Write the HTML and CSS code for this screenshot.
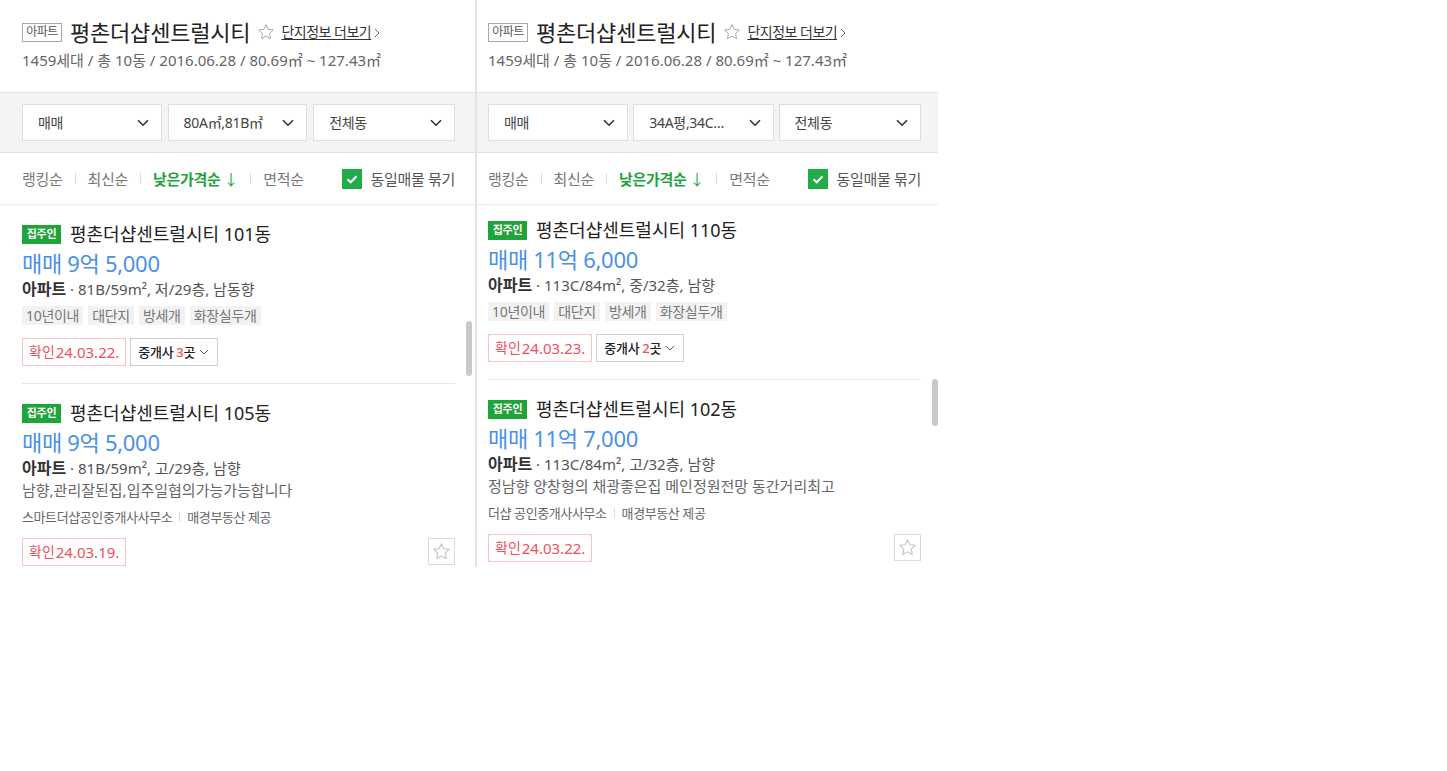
FILE: index.html
```html
<!DOCTYPE html>
<html lang="ko">
<head>
<meta charset="utf-8">
<title>평촌더샵센트럴시티</title>
<link rel="stylesheet" href="styles.css">
</head>
<body>
<div class="wrap">
  <section class="panel panel--left">
    <header class="complex">
      <div class="complex-row">
        <span class="type-tag">아파트</span>
        <h1 class="complex-name">평촌더샵센트럴시티</h1>
        <svg class="fav" viewBox="0 0 20 20" width="18" height="18"><path d="M10 1.8l2.45 5.25 5.7.7-4.2 3.95 1.08 5.68L10 14.6l-5.03 2.78 1.08-5.68L1.85 7.75l5.7-.7z" fill="none" stroke="#a8a8a8" stroke-width="1.1" stroke-linejoin="round"/></svg>
        <a class="more" href="#">단지정보 더보기</a><svg class="more-arrow" viewBox="0 0 6 10" width="6" height="10"><path d="M1 1l4 4-4 4" fill="none" stroke="#666" stroke-width="1"/></svg>
      </div>
      <p class="complex-sub">1459세대 / 총 10동 / 2016.06.28 / 80.69㎡ ~ 127.43㎡</p>
    </header>
    <div class="filters">
      <div class="select"><span>매매</span><svg viewBox="0 0 12 8" width="12" height="8"><path d="M1 1.2l5 5 5-5" fill="none" stroke="#333" stroke-width="1.6"/></svg></div>
      <div class="select"><span>80A㎡,81B㎡</span><svg viewBox="0 0 12 8" width="12" height="8"><path d="M1 1.2l5 5 5-5" fill="none" stroke="#333" stroke-width="1.6"/></svg></div>
      <div class="select select--wide"><span>전체동</span><svg viewBox="0 0 12 8" width="12" height="8"><path d="M1 1.2l5 5 5-5" fill="none" stroke="#333" stroke-width="1.6"/></svg></div>
    </div>
    <div class="sorts">
      <span class="sort">랭킹순</span><i class="sep"></i>
      <span class="sort">최신순</span><i class="sep"></i>
      <span class="sort sort--on">낮은가격순<span class="arrow">↓</span></span><i class="sep"></i>
      <span class="sort">면적순</span>
      <label class="group"><span class="check"><svg viewBox="0 0 20 20" width="20" height="20"><path d="M5.5 10.2l3.2 3.1 5.8-6" fill="none" stroke="#fff" stroke-width="2"/></svg></span>동일매물 묶기</label>
    </div>
    <div class="list">
      <div class="list-inner">
        <article class="item">
          <div class="item-title"><span class="owner">집주인</span>평촌더샵센트럴시티 101동</div>
          <div class="price">매매 9억 5,000</div>
          <div class="info"><b>아파트</b> · 81B/59m², 저/29층, 남동향</div>
          <div class="tags"><span>10년이내</span><span>대단지</span><span>방세개</span><span>화장실두개</span></div>
          <div class="meta"><span class="confirm"><em>확인</em>24.03.22.</span><span class="broker">중개사 <strong>3</strong>곳<svg viewBox="0 0 10 6" width="10" height="6"><path d="M1 1l4 4 4-4" fill="none" stroke="#555" stroke-width="1"/></svg></span></div>
        </article>
        <article class="item">
          <div class="item-title"><span class="owner">집주인</span>평촌더샵센트럴시티 105동</div>
          <div class="price">매매 9억 5,000</div>
          <div class="info"><b>아파트</b> · 81B/59m², 고/29층, 남향</div>
          <div class="desc">남향,관리잘된집,입주일협의가능가능합니다</div>
          <div class="agent">스마트더샵공인중개사사무소<i class="sep sep--s"></i>매경부동산 제공</div>
          <div class="meta meta--star"><span class="confirm"><em>확인</em>24.03.19.</span><span class="star-btn"><svg viewBox="0 0 20 20" width="19" height="19"><path d="M10 1.8l2.45 5.25 5.7.7-4.2 3.95 1.08 5.68L10 14.6l-5.03 2.78 1.08-5.68L1.85 7.75l5.7-.7z" fill="none" stroke="#c4c4c4" stroke-width="1.1" stroke-linejoin="round"/></svg></span></div>
        </article>
      </div>
      <span class="thumb thumb--left"></span>
    </div>
  </section>

  <section class="panel panel--right">
    <header class="complex">
      <div class="complex-row">
        <span class="type-tag">아파트</span>
        <h1 class="complex-name">평촌더샵센트럴시티</h1>
        <svg class="fav" viewBox="0 0 20 20" width="18" height="18"><path d="M10 1.8l2.45 5.25 5.7.7-4.2 3.95 1.08 5.68L10 14.6l-5.03 2.78 1.08-5.68L1.85 7.75l5.7-.7z" fill="none" stroke="#a8a8a8" stroke-width="1.1" stroke-linejoin="round"/></svg>
        <a class="more" href="#">단지정보 더보기</a><svg class="more-arrow" viewBox="0 0 6 10" width="6" height="10"><path d="M1 1l4 4-4 4" fill="none" stroke="#666" stroke-width="1"/></svg>
      </div>
      <p class="complex-sub">1459세대 / 총 10동 / 2016.06.28 / 80.69㎡ ~ 127.43㎡</p>
    </header>
    <div class="filters">
      <div class="select"><span>매매</span><svg viewBox="0 0 12 8" width="12" height="8"><path d="M1 1.2l5 5 5-5" fill="none" stroke="#333" stroke-width="1.6"/></svg></div>
      <div class="select"><span>34A평,34C…</span><svg viewBox="0 0 12 8" width="12" height="8"><path d="M1 1.2l5 5 5-5" fill="none" stroke="#333" stroke-width="1.6"/></svg></div>
      <div class="select select--wide"><span>전체동</span><svg viewBox="0 0 12 8" width="12" height="8"><path d="M1 1.2l5 5 5-5" fill="none" stroke="#333" stroke-width="1.6"/></svg></div>
    </div>
    <div class="sorts">
      <span class="sort">랭킹순</span><i class="sep"></i>
      <span class="sort">최신순</span><i class="sep"></i>
      <span class="sort sort--on">낮은가격순<span class="arrow">↓</span></span><i class="sep"></i>
      <span class="sort">면적순</span>
      <label class="group"><span class="check"><svg viewBox="0 0 20 20" width="20" height="20"><path d="M5.5 10.2l3.2 3.1 5.8-6" fill="none" stroke="#fff" stroke-width="2"/></svg></span>동일매물 묶기</label>
    </div>
    <div class="list">
      <div class="list-inner list-inner--scrolled">
        <article class="item">
          <div class="item-title"><span class="owner">집주인</span>평촌더샵센트럴시티 110동</div>
          <div class="price">매매 11억 6,000</div>
          <div class="info"><b>아파트</b> · 113C/84m², 중/32층, 남향</div>
          <div class="tags"><span>10년이내</span><span>대단지</span><span>방세개</span><span>화장실두개</span></div>
          <div class="meta"><span class="confirm"><em>확인</em>24.03.23.</span><span class="broker">중개사 <strong>2</strong>곳<svg viewBox="0 0 10 6" width="10" height="6"><path d="M1 1l4 4 4-4" fill="none" stroke="#555" stroke-width="1"/></svg></span></div>
        </article>
        <article class="item">
          <div class="item-title"><span class="owner">집주인</span>평촌더샵센트럴시티 102동</div>
          <div class="price">매매 11억 7,000</div>
          <div class="info"><b>아파트</b> · 113C/84m², 고/32층, 남향</div>
          <div class="desc">정남향 양창형의 채광좋은집 메인정원전망 동간거리최고</div>
          <div class="agent">더샵 공인중개사사무소<i class="sep sep--s"></i>매경부동산 제공</div>
          <div class="meta meta--star"><span class="confirm"><em>확인</em>24.03.22.</span><span class="star-btn"><svg viewBox="0 0 20 20" width="19" height="19"><path d="M10 1.8l2.45 5.25 5.7.7-4.2 3.95 1.08 5.68L10 14.6l-5.03 2.78 1.08-5.68L1.85 7.75l5.7-.7z" fill="none" stroke="#c4c4c4" stroke-width="1.1" stroke-linejoin="round"/></svg></span></div>
        </article>
      </div>
      <span class="thumb thumb--right"></span>
    </div>
  </section>
</div>
</body>
</html>
```

FILE: styles.css
```css
* { box-sizing: border-box; }
html, body { margin: 0; padding: 0; background: #fff; }
body {
  font-family: "Noto Sans", "Noto Sans CJK KR", sans-serif;
  color: #333;
  font-size: 14px;
  line-height: 20px;
}
.wrap { display: flex; align-items: flex-start; }

.panel { height: 567px; display: flex; flex-direction: column; }
.panel--left { width: 477px; border-right: 2px solid #e3e3e3; }
.panel--right { width: 461px; }

.complex { height: 93px; padding: 20px 20px 0 22px; border-bottom: 1px solid #e3e3e3; }
.panel--right .complex { padding-left: 11px; padding-right: 17px; }
.complex-row { display: flex; align-items: center; height: 24px; }
.type-tag {
  display: inline-flex; align-items: center; justify-content: center;
  width: 40px; height: 19px; border: 1px solid #a8a8a8;
  font-size: 12px; color: #555; line-height: 16px; letter-spacing: -0.5px;
}
.complex-name { margin: 0 0 0 8px; font-size: 22px; font-weight: 400; color: #222; line-height: 24px; letter-spacing: -0.2px; }
.fav { margin-left: 7px; }
.more { margin-left: 6px; font-size: 14px; color: #333; text-decoration: underline; text-underline-offset: 2px; letter-spacing: -0.5px; }
.more-arrow { margin-left: 3px; margin-top: 2px; }
.complex-sub { margin: 6px 0 0; font-size: 15px; color: #666; line-height: 20px; letter-spacing: 0; }

.filters {
  display: flex; gap: 6px; background: #f4f4f4;
  padding: 11px 20px 11px 22px; border-bottom: 1px solid #e1e1e1;
}
.panel--right .filters { padding-left: 11px; padding-right: 17px; gap: 5px; }
.select {
  flex: 1; height: 37px; background: #fff; border: 1px solid #dedede;
  display: flex; align-items: center; justify-content: space-between;
  padding: 0 12px 0 15px; font-size: 14px; color: #444; letter-spacing: -0.3px;
}
.select--wide { flex: 1.02; }
.select svg { flex: none; }

.sorts {
  height: 52px; display: flex; align-items: center;
  padding: 0 20px 0 22px; border-bottom: 1px solid #ececec;
  font-size: 15px; color: #777; letter-spacing: -0.3px;
}
.panel--right .sorts { padding-left: 11px; padding-right: 17px; }
.sep { display: inline-block; width: 1px; height: 11px; background: #dcdcdc; margin: 0 12px; }
.sort--on { color: #1ca53b; font-weight: 700; }
.arrow { margin-left: 3px; font-weight: 400; }
.group { margin-left: auto; display: flex; align-items: center; color: #555; }
.check { width: 20px; height: 20px; background: #22ac48; margin-right: 8px; display: flex; }

.list { position: relative; flex: 1; overflow: hidden; }
.list-inner { padding: 0 20px 0 22px; }
.panel--right .list-inner { padding-left: 11px; padding-right: 17px; }
.list-inner--scrolled { margin-top: -4px; }

.item { padding: 18px 0 17px; border-bottom: 1px solid #e7e7e7; }
.item-title { display: flex; align-items: center; height: 22px; font-size: 18px; color: #222; letter-spacing: 0; }
.owner {
  display: inline-flex; align-items: center; justify-content: center;
  width: 39px; height: 19px; background: #1fa43a; color: #fff;
  font-size: 11px; font-weight: 700; margin-right: 9px; letter-spacing: -0.3px;
}
.price { margin-top: 4px; font-size: 22px; line-height: 28px; color: #4a90e8; letter-spacing: -0.3px; }
.info { margin-top: 1px; font-size: 15px; line-height: 22px; color: #555; letter-spacing: 0; }
.info b { font-size: 16px; color: #333; }
.tags { display: flex; gap: 5px; margin-top: 6px; }
.tags span { height: 19px; line-height: 19px; padding: 0 4px; background: #f2f2f2; color: #777; font-size: 14px; letter-spacing: -0.3px; }
.desc { font-size: 15px; line-height: 22px; color: #666; letter-spacing: 0; }
.agent { margin-top: 7px; font-size: 13px; line-height: 18px; color: #666; display: flex; align-items: center; letter-spacing: -0.4px; }
.sep--s { height: 10px; margin: 0 7px; }
.meta { display: flex; gap: 4px; margin-top: 13px; }
.meta--star { margin-top: 12px; justify-content: space-between; }
.confirm {
  height: 28px; display: inline-flex; align-items: center; padding: 0 6px;
  border: 1px solid #f8c2c6; color: #f0505e; font-size: 15px; letter-spacing: 0;
}
.confirm em { font-style: normal; font-size: 14px; margin-right: 1px; }
.broker {
  height: 28px; display: inline-flex; align-items: center; padding: 0 8px 0 7px;
  border: 1px solid #cfcfcf; color: #222; font-size: 13px; font-weight: 500; letter-spacing: -0.3px;
}
.broker strong { color: #f0505e; font-weight: 500; margin-left: 3px; }
.broker svg { margin-left: 4px; }
.star-btn { width: 27px; height: 27px; border: 1px solid #dadada; display: flex; align-items: center; justify-content: center; }

.thumb { position: absolute; width: 6px; border-radius: 3px; background: #c9c9c9; }
.thumb--left { right: 3px; top: 116px; height: 55px; }
.thumb--right { right: 0; top: 174px; height: 47px; }
```
